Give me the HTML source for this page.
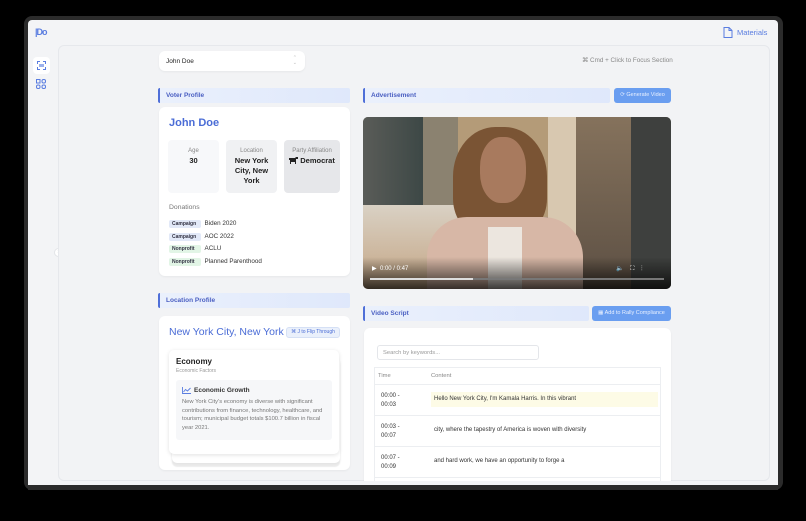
<!DOCTYPE html>
<html><head><meta charset="utf-8"><style>
*{box-sizing:border-box;margin:0;padding:0}
body{width:806px;height:521px;background:#000;font-family:"Liberation Sans",sans-serif;position:relative;overflow:hidden}
.a{position:absolute}
.frame{left:24px;top:16px;width:759px;height:474px;background:#2b2b2b;border-radius:8px}
.app{left:28px;top:20px;width:750px;height:465px;background:#f3f4f6;border-radius:4px}
.main{left:58px;top:45px;width:712px;height:436px;background:#f2f3f5;border:1px solid #e6e8ec;border-radius:6px}
.card{background:#fff;border-radius:6px;box-shadow:0 1px 2px rgba(0,0,0,.05)}
.hdr{height:15px;border-left:2px solid #4f6fd8;border-radius:2px;background:linear-gradient(90deg,#eaf0fc,#dfe8fb);color:#4a5fc2;font-size:6.5px;font-weight:bold;padding-left:6px;line-height:15px}
.btn{background:#6a9ef0;color:#e8f0ff;font-size:5.5px;border-radius:3px;text-align:center;line-height:15px}
.stat{border-radius:4px;text-align:center;font-size:6px;color:#888}
.stat b{display:block;color:#222;font-size:7.5px;line-height:10px;margin-top:2px}
.tag{display:inline-block;font-size:5px;font-weight:bold;padding:0 3px;height:8px;line-height:8px;border-radius:2px;width:32px}
.row{position:absolute;left:169px;font-size:6.3px;color:#333;height:10px;line-height:8px}
.tr{position:absolute;left:0;width:286px;border-top:1px solid #eceef1;font-size:6px;color:#333}
</style></head><body>
<div class="a frame"></div>
<div class="a app"></div>
<div class="a" style="left:35px;top:27px;color:#5a7de0;font-size:9px;font-weight:bold;letter-spacing:-1px">|Do</div>
<div class="a" style="left:33px;top:57px;width:17px;height:17px;background:#fff;border-radius:4px"></div>
<div class="a" style="left:37px;top:61px;width:9px;height:9px;border:1px dashed #5a7de0"></div>
<div class="a" style="left:39px;top:64px;width:5px;height:3px;background:#5a7de0;opacity:.6"></div>
<svg class="a" style="left:36px;top:79px" width="10" height="10" viewBox="0 0 10 10" fill="none" stroke="#5a7de0" stroke-width="1"><rect x=".5" y=".5" width="3.5" height="3.5"/><rect x="6" y=".5" width="3.5" height="3.5" rx="1.5"/><rect x=".5" y="6" width="3.5" height="3.5" rx="1.5"/><rect x="6" y="6" width="3.5" height="3.5" rx="1.5"/></svg>
<div class="a" style="left:54px;top:248px;width:9px;height:9px;border-radius:50%;background:#fff;border:1px solid #e3e5e8;color:#aaa;font-size:6px;line-height:7px;text-align:center">›</div>
<svg class="a" style="left:723px;top:27px" width="10" height="11" viewBox="0 0 10 11" fill="none" stroke="#5a7de0" stroke-width="1"><path d="M1 .5h5l3 3v7H1z M6 .5v3h3"/></svg>
<div class="a" style="left:737px;top:28px;color:#5a7de0;font-size:7.5px">Materials</div>
<div class="a main"></div>
<div class="a card" style="left:159px;top:51px;width:146px;height:20px;font-size:6.5px;color:#222;padding:7px 0 0 7px">John Doe<span style="position:absolute;right:8px;top:5px;color:#bbb;font-size:5px;line-height:5px">⌃<br>⌄</span></div>
<div class="a" style="left:582px;top:57px;font-size:6.3px;color:#888">⌘ Cmd + Click to Focus Section</div>
<div class="a hdr" style="left:158px;top:88px;width:192px">Voter Profile</div>
<div class="a card" style="left:159px;top:107px;width:191px;height:169px"></div>
<div class="a" style="left:169px;top:117px;font-size:11px;font-weight:bold;color:#4a6cd6">John Doe</div>
<div class="a stat" style="left:168px;top:140px;width:51px;height:53px;background:#f7f8fa;padding-top:8px">Age<b>30</b></div>
<div class="a stat" style="left:226px;top:140px;width:51px;height:53px;background:#f0f1f3;padding-top:8px">Location<b>New York City, New York</b></div>
<div class="a stat" style="left:284px;top:140px;width:56px;height:53px;background:#e6e7ea;padding-top:8px">Party Affiliation<b><svg width="9" height="7" viewBox="0 0 9 7" style="vertical-align:-1px"><path d="M0 1h6l1-1h2v2H7v5H6V5H2v2H1V3H0z" fill="#222"/></svg> Democrat</b></div>
<div class="a" style="left:169px;top:204px;font-size:6.8px;color:#777">Donations</div>
<div class="row" style="top:220px"><span class="tag" style="background:#e2e9f8;color:#334">Campaign</span> &nbsp;Biden 2020</div>
<div class="row" style="top:233px"><span class="tag" style="background:#e2e9f8;color:#334">Campaign</span> &nbsp;AOC 2022</div>
<div class="row" style="top:245px"><span class="tag" style="background:#e2f5e6;color:#334">Nonprofit</span> &nbsp;ACLU</div>
<div class="row" style="top:258px"><span class="tag" style="background:#e2f5e6;color:#334">Nonprofit</span> &nbsp;Planned Parenthood</div>
<div class="a hdr" style="left:158px;top:293px;width:192px">Location Profile</div>
<div class="a card" style="left:159px;top:316px;width:191px;height:154px"></div>
<div class="a" style="left:169px;top:326px;font-size:10.5px;color:#4a6cd6">New York City, New York</div>
<div class="a" style="left:286px;top:327px;width:54px;height:11px;background:#eaf0fb;border:1px solid #d5e0f5;border-radius:3px;font-size:5px;color:#4a6cd6;line-height:9px;text-align:center">⌘ J to Flip Through</div>
<div class="a" style="left:172px;top:357px;width:168px;height:106px;background:#fff;border-radius:5px;box-shadow:0 2px 2px #e4e4e4,0 4px 1px #eee"></div>
<div class="a" style="left:169px;top:350px;width:170px;height:104px;background:#fff;border-radius:5px;box-shadow:0 1px 4px rgba(0,0,0,.12)"></div>
<div class="a" style="left:176px;top:357px;font-size:8px;font-weight:bold;color:#222">Economy</div>
<div class="a" style="left:176px;top:368px;font-size:5px;color:#999">Economic Factors</div>
<div class="a" style="left:176px;top:380px;width:156px;height:60px;background:#f6f7f9;border-radius:3px"></div>
<svg class="a" style="left:182px;top:387px" width="9" height="7" viewBox="0 0 9 7" fill="none" stroke="#5a7de0" stroke-width=".9"><path d="M.5 0v6.5H9 M1.5 5l2-2.5 2 1.5 3-3"/></svg>
<div class="a" style="left:194px;top:387px;font-size:6.5px;font-weight:bold;color:#333">Economic Growth</div>
<div class="a" style="left:182px;top:398px;width:150px;font-size:5.8px;line-height:8.5px;color:#777">New York City's economy is diverse with significant contributions from finance, technology, healthcare, and tourism; municipal budget totals $100.7 billion in fiscal year 2021.</div>
<div class="a hdr" style="left:363px;top:88px;width:247px">Advertisement</div>
<div class="a btn" style="left:614px;top:88px;width:57px">⟳ Generate Video</div>
<div class="a" style="left:363px;top:117px;width:308px;height:172px;border-radius:5px;overflow:hidden;background:#6b655c">
 <div class="a" style="left:0;top:0;width:60px;height:95px;background:linear-gradient(90deg,#5a5c58,#3d4846)"></div>
 <div class="a" style="left:60px;top:0;width:35px;height:90px;background:#8b8270"></div>
 <div class="a" style="left:95px;top:0;width:90px;height:100px;background:#b49b78"></div>
 <div class="a" style="left:185px;top:0;width:28px;height:130px;background:#d8c8b0"></div>
 <div class="a" style="left:213px;top:0;width:55px;height:172px;background:linear-gradient(#85725c,#5d5044)"></div>
 <div class="a" style="left:268px;top:0;width:40px;height:172px;background:#3e403e"></div>
 <div class="a" style="left:0;top:88px;width:110px;height:84px;background:linear-gradient(#d9d1c4,#c4a584)"></div>
 <div class="a" style="left:90px;top:10px;width:94px;height:110px;border-radius:45% 45% 35% 35%;background:#7a5434"></div>
 <div class="a" style="left:117px;top:20px;width:46px;height:66px;border-radius:45%;background:#a87a5e"></div>
 <div class="a" style="left:64px;top:100px;width:156px;height:80px;border-radius:40px 40px 0 0;background:#d7b7a6"></div>
 <div class="a" style="left:125px;top:110px;width:34px;height:62px;background:#ece6df"></div>
 <div class="a" style="left:0;top:140px;width:308px;height:32px;background:linear-gradient(rgba(0,0,0,0),rgba(0,0,0,.75))"></div>
 <div class="a" style="left:9px;top:148px;color:#fff;font-size:6px">▶ &nbsp;0:00 / 0:47</div>
 <div class="a" style="left:253px;top:148px;color:#fff;font-size:6px">🔈 &nbsp;&nbsp; ⛶ &nbsp;&nbsp; ⋮</div>
 <div class="a" style="left:7px;top:161px;width:294px;height:1.5px;background:#777"></div>
 <div class="a" style="left:7px;top:161px;width:103px;height:1.5px;background:#ddd"></div>
</div>
<div class="a hdr" style="left:363px;top:306px;width:226px">Video Script</div>
<div class="a btn" style="left:592px;top:306px;width:79px">▦ Add to Rally Compliance</div>
<div class="a card" style="left:364px;top:328px;width:307px;height:160px"></div>
<div class="a" style="left:377px;top:345px;width:162px;height:15px;border:1px solid #e4e6ea;border-radius:3px;font-size:5.8px;color:#999;padding:4px 0 0 5px">Search by keywords...</div>
<div class="a" style="left:374px;top:367px;width:287px;height:118px;border:1px solid #eceef1;border-bottom:none;overflow:hidden">
 <div class="a" style="left:3px;top:5px;font-size:5.8px;color:#888">Time</div>
 <div class="a" style="left:56px;top:5px;font-size:5.8px;color:#888">Content</div>
 <div class="tr" style="top:16px;height:31px"><div class="a" style="left:6px;top:7px;line-height:8.5px">00:00 -<br>00:03</div><div class="a" style="left:56px;top:7px;width:227px;height:15px;background:#fdfbe6;padding:4px 3px">Hello New York City, I'm Kamala Harris. In this vibrant</div></div>
 <div class="tr" style="top:47px;height:31px"><div class="a" style="left:6px;top:7px;line-height:8.5px">00:03 -<br>00:07</div><div class="a" style="left:59px;top:11px">city, where the tapestry of America is woven with diversity</div></div>
 <div class="tr" style="top:78px;height:31px"><div class="a" style="left:6px;top:7px;line-height:8.5px">00:07 -<br>00:09</div><div class="a" style="left:59px;top:11px">and hard work, we have an opportunity to forge a</div></div>
 <div class="tr" style="top:109px;height:31px"></div>
</div>
<div class="a" style="left:28px;top:485px;width:750px;height:5px;background:#2b2b2b"></div>
<div class="a" style="left:28px;top:481px;width:750px;height:4px;background:#f3f4f6"></div>
</body></html>
